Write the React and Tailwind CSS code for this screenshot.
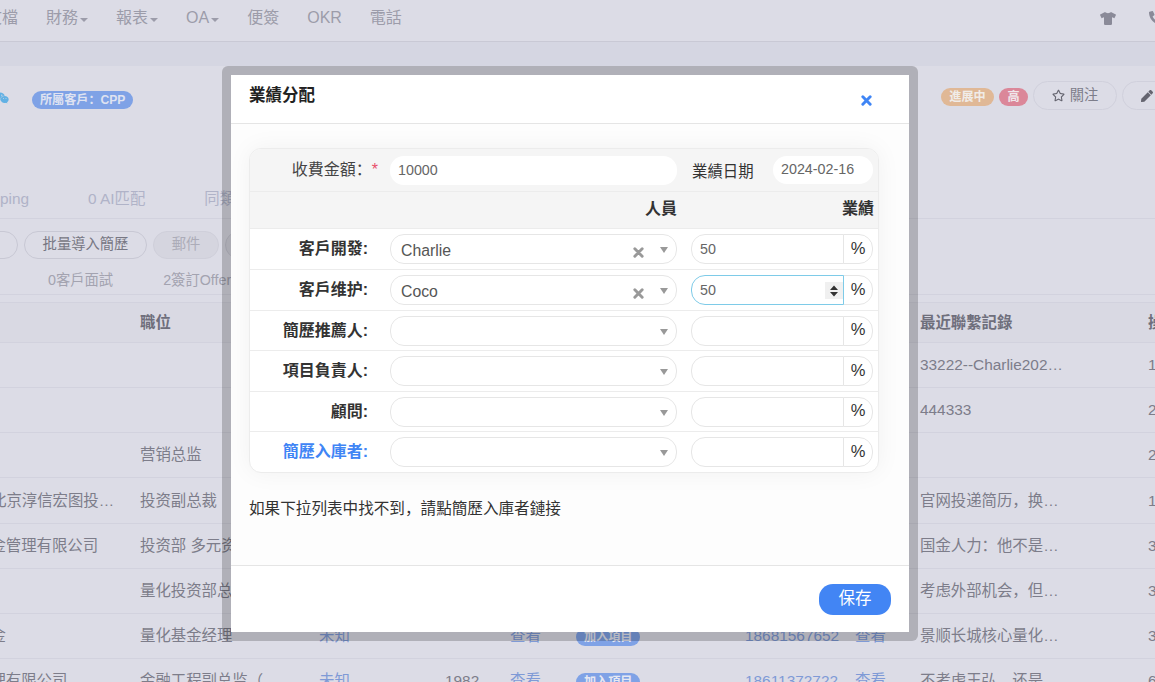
import React from "react";
import { FaTshirt, FaPhoneAlt, FaWeixin, FaRegStar, FaPen } from "react-icons/fa";

function NavCaret({ label }) {
  return (
    <span className="flex items-center whitespace-nowrap">
      {label}
      <span className="ml-[2px] mt-[3px] w-0 h-0 border-x-[4px] border-x-transparent border-t-[4px] border-t-[#9c9caa]" />
    </span>
  );
}

function ThickX({ size, color }) {
  return (
    <svg width={size} height={size} viewBox="0 0 12 12" className="block">
      <path d="M2 2 L10 10 M10 2 L2 10" stroke={color} strokeWidth="3.2" strokeLinecap="round" fill="none" />
    </svg>
  );
}

const COLS = "grid grid-cols-[165px_179px_126px_65px_66px_169px_110px_65px_228px_60px] -ml-[25px] w-[1233px] items-center border-b border-[#d2d2de]";

function TableRow({ company, companyPad, title, unknown, year, view, phone, view2, note, last, tall }) {
  return (
    <div className={`${COLS} ${tall ? "h-[46px]" : "h-[45px]"}`}>
      <span className={`whitespace-nowrap overflow-hidden ${companyPad ? "pl-[16px]" : ""}`}>{company}</span>
      <span className="whitespace-nowrap">{title}</span>
      <span className="text-[#7f9ad6]">{unknown}</span>
      <span>{year}</span>
      <span className="text-[#7f9ad6]">{view}</span>
      <span>
        {view && (
          <span className="inline-block h-[18px] leading-[18px] px-[8px] rounded-full bg-[#7fa2e6] text-[#e6e8f2] text-[12.1px] font-bold">加入項目</span>
        )}
      </span>
      <span className="text-[#7f9ad6] whitespace-nowrap">{phone}</span>
      <span className="text-[#7f9ad6]">{view2}</span>
      <span className="whitespace-nowrap">{note}</span>
      <span>{last}</span>
    </div>
  );
}

function Background() {
  return (
    <div className="w-[1155px] h-[682px] overflow-hidden bg-[#dcdce6] text-[15.4px] text-[#7d7d8a]">
      {/* nav */}
      <div className="h-[42px] border-b border-[#c9c9d5] flex items-center justify-between text-[#9c9caa] text-[16px]">
        <div className="flex items-center gap-[28px] -ml-[14px] -mt-[5px]">
          <span>文檔</span>
          <NavCaret label="財務" />
          <NavCaret label="報表" />
          <NavCaret label="OA" />
          <span>便簽</span>
          <span>OKR</span>
          <span>電話</span>
        </div>
        <div className="flex items-center gap-[33px] -mr-[8px] -mt-[5px] text-[#8a8a98]">
          <FaTshirt className="w-[16px] h-[13px]" />
          <FaPhoneAlt className="w-[14px] h-[14px]" />
        </div>
      </div>
      <div className="h-[24px] bg-[#d5d6e2]" />
      {/* title row */}
      <div className="h-[153px] border-b border-[#d2d2de]">
        <div className="flex items-center justify-between pt-[15px] h-[44px]">
          <div className="flex items-center gap-[23px] -ml-[5px] mt-[9px]">
            <FaWeixin className="w-[14px] h-[14px] text-[#62b1e4] -mt-[4px]" />
            <span className="h-[18px] leading-[18px] px-[8px] rounded-full bg-[#7fa2e6] text-[#dfe3f1] text-[12.1px] font-bold whitespace-nowrap">所屬客戶：CPP</span>
          </div>
          <div className="flex items-center -mr-[40px]">
            <span className="w-[53px] mt-[3px] h-[18px] leading-[18px] text-center rounded-full bg-[#e0b896] text-[#f0ece8] text-[12.1px] font-bold whitespace-nowrap">進展中</span>
            <span className="ml-[5px] mt-[3px] w-[29px] h-[18px] leading-[18px] text-center rounded-full bg-[#db8799] text-[#f0e6ea] text-[12.1px] font-bold">高</span>
            <span className="ml-[5px] h-[29px] w-[84px] flex items-center justify-center gap-[5px] rounded-full border border-[#d0d0dc] text-[14.3px] text-[#7d7d8a] whitespace-nowrap">
              <FaRegStar className="w-[13px] h-[13px] text-[#64646f]" />關注
            </span>
            <span className="ml-[5px] h-[29px] w-[73px] pl-[18px] flex items-center rounded-full border border-[#d0d0dc]">
              <FaPen className="w-[12px] h-[12px] text-[#64646f]" />
            </span>
          </div>
        </div>
        <div className="mt-[79px] flex items-center gap-[59px] -ml-[30px] text-[#b0b3c8] leading-[20px]">
          <span>Mapping</span>
          <span>0 AI匹配</span>
          <span className="whitespace-nowrap">同類人選</span>
        </div>
      </div>
      {/* actions */}
      <div className="flex items-center gap-[6px] -ml-[60px] mt-[12px] text-[14.3px] h-[28px]">
        <span className="w-[78px] h-[28px] rounded-full border border-[#c8c8d4]" />
        <span className="w-[123px] h-[28px] leading-[24px] text-center rounded-full border border-[#c8c8d4] text-[#777783] whitespace-nowrap">批量導入簡歷</span>
        <span className="w-[66px] h-[28px] leading-[24px] text-center rounded-full border border-[#cfcfda] bg-[#d5d5df] text-[#acacb8]">郵件</span>
        <span className="w-[66px] h-[28px] rounded-full border border-[#c8c8d4] bg-[#d5d5df]" />
      </div>
      <div className="flex items-center gap-[50px] pl-[48px] h-[36px] pt-[8px] text-[14.3px] text-[#a3a3b0] border-b border-[#d2d2de]">
        <span>0客戶面試</span>
        <span className="whitespace-nowrap">2簽訂Offer</span>
      </div>
      {/* table */}
      <div className="mt-[7px] border-t border-[#d2d2de]">
        <div className={`${COLS} h-[40px] bg-[#d9d9e3] font-bold text-[#6f6f7c]`}>
          <span /><span>職位</span><span /><span /><span /><span /><span /><span />
          <span className="whitespace-nowrap">最近聯繫記錄</span><span>操</span>
        </div>
        <TableRow note="33222--Charlie202…" last="1" />
        <TableRow note="444333" last="2" />
        <TableRow title="营销总监" last="2" />
        <TableRow tall company="北京淳信宏图投…" companyPad title="投资副总裁" note="官网投递简历，换…" last="1" />
        <TableRow company="基金管理有限公司" title="投资部 多元资产" note="国金人力：他不是…" last="3" />
        <TableRow title="量化投资部总监" note="考虑外部机会，但…" last="3" />
        <TableRow company="基金" title="量化基金经理" unknown="未知" view="查看" phone="18681567652" view2="查看" note="景顺长城核心量化…" last="3" />
        <TableRow company="管理有限公司" title="金融工程副总监（" unknown="未知" year="1982" view="查看" phone="18611372722" view2="查看" note="不考虑王弘，还是…" last="6" />
      </div>
    </div>
  );
}

function Select({ value, clear }) {
  return (
    <div className="relative w-[287px] h-[30px] rounded-[14px] border border-[#e6e6e6] bg-white flex items-center pl-[10px] pt-[3px] text-[15.8px] text-[#555]">
      {value}
      {clear && <span className="absolute left-[242px] top-[12px]"><ThickX size={11} color="#999" /></span>}
      <span className="absolute left-[269px] top-[12px] w-0 h-0 border-x-[4px] border-x-transparent border-t-[6px] border-t-[#999]" />
    </div>
  );
}

function Amount({ value, focus }) {
  return (
    <div className="flex w-[182px] h-[30px]">
      <div className={`relative w-[153px] rounded-l-[14px] border bg-white flex items-center pl-[8px] pt-[1px] text-[14.3px] text-[#666] ${focus ? "border-[#7ecbe8]" : "border-[#e6e6e6]"}`}>
        {value}
        {focus && (
          <span className="absolute right-0 top-[6px] w-[18px] h-[17px] bg-[#f0f0f0] flex items-center justify-center">
            <svg width="10" height="12" viewBox="0 0 10 12"><path d="M5 0.5 L9 5 H1 Z M1 7 H9 L5 11.5 Z" fill="#333" /></svg>
          </span>
        )}
      </div>
      <div className="w-[30px] -ml-px rounded-r-[14px] border border-[#e6e6e6] bg-white flex items-center justify-center text-[16.5px] text-[#333] pb-[2px]">%</div>
    </div>
  );
}

function FormRow({ label, value, clear, focus, amount, blue, h }) {
  return (
    <div className={`flex items-center border-t border-[#ececec] ${h}`}>
      <div className={`w-[118px] text-right text-[16px] font-bold whitespace-nowrap ${blue ? "text-[#3f85f5]" : "text-[#333]"}`}>{label}</div>
      <div className="ml-[22px]"><Select value={value} clear={clear} /></div>
      <div className="ml-[14px]"><Amount value={amount} focus={focus} /></div>
    </div>
  );
}

function Modal() {
  return (
    <div className="absolute left-[222px] top-[66px] w-[696px] h-[575px] rounded-[6px] border-[9px] border-black/20 bg-white bg-clip-padding text-[#333]">
      <div className="h-[49px] border-b border-[#e5e5e5] relative pl-[18px] pt-[8px] text-[16.5px] font-bold text-[#222] leading-[24px]">
        業績分配
        <span className="absolute left-[630px] top-[20px]"><ThickX size={11} color="#3f85f5" /></span>
      </div>
      <div className="h-[442px] pt-[24px] px-[18px] border-b border-[#e5e5e5] bg-[#fdfdfd]">
        <div className="w-[630px] h-[325px] rounded-[12px] border border-[#ececec] overflow-hidden bg-white shadow-[0_0_24px_rgba(0,0,0,0.05)]">
          <div className="h-[42px] bg-[#f5f5f5] flex items-center">
            <div className="w-[128px] text-right text-[16px] text-[#444] whitespace-nowrap">
              收費金額：<span className="text-[#e8506a]">*</span>
            </div>
            <div className="ml-[12px] w-[287px] h-[29px] rounded-[14px] bg-white flex items-center pl-[8px] pt-[1px] text-[14.3px] text-[#666]">10000</div>
            <div className="ml-[15px] w-[81px] text-[15.4px] text-[#333] pt-[3px] whitespace-nowrap">業績日期</div>
            <div className="w-[100px] h-[28px] -mt-[1px] rounded-[14px] bg-white flex items-center pl-[8px] text-[14.3px] text-[#666]">2024-02-16</div>
          </div>
          <div className="h-[37px] bg-[#f5f5f5] border-t border-[#ececec] flex items-center font-bold text-[16px] text-[#333] pb-[2px]">
            <div className="w-[427px] text-right">人員</div>
            <div className="w-[197px] text-right">業績</div>
          </div>
          <FormRow h="h-[41px]" label="客戶開發:" value="Charlie" clear amount="50" />
          <FormRow h="h-[41px]" label="客戶维护:" value="Coco" clear amount="50" focus />
          <FormRow h="h-[40px]" label="簡歷推薦人:" />
          <FormRow h="h-[41px]" label="項目負責人:" />
          <FormRow h="h-[40px]" label="顧問:" />
          <FormRow h="h-[41px]" label="簡歷入庫者:" blue />
        </div>
        <p className="mt-[26px] text-[15.6px] leading-[20px] text-[#333] whitespace-nowrap">如果下拉列表中找不到，請點簡歷入庫者鏈接</p>
      </div>
      <div className="flex justify-end pt-[18px] pr-[18px]">
        <button className="w-[72px] h-[31px] rounded-[14px] bg-[#4285f4] text-white text-[16.5px] pb-[2px]">保存</button>
      </div>
    </div>
  );
}

export default function App() {
  return (
    <div className="relative w-[1155px] h-[682px] overflow-hidden font-['Liberation_Sans','Noto_Sans_CJK_SC',sans-serif]">
      <Background />
      <Modal />
    </div>
  );
}
